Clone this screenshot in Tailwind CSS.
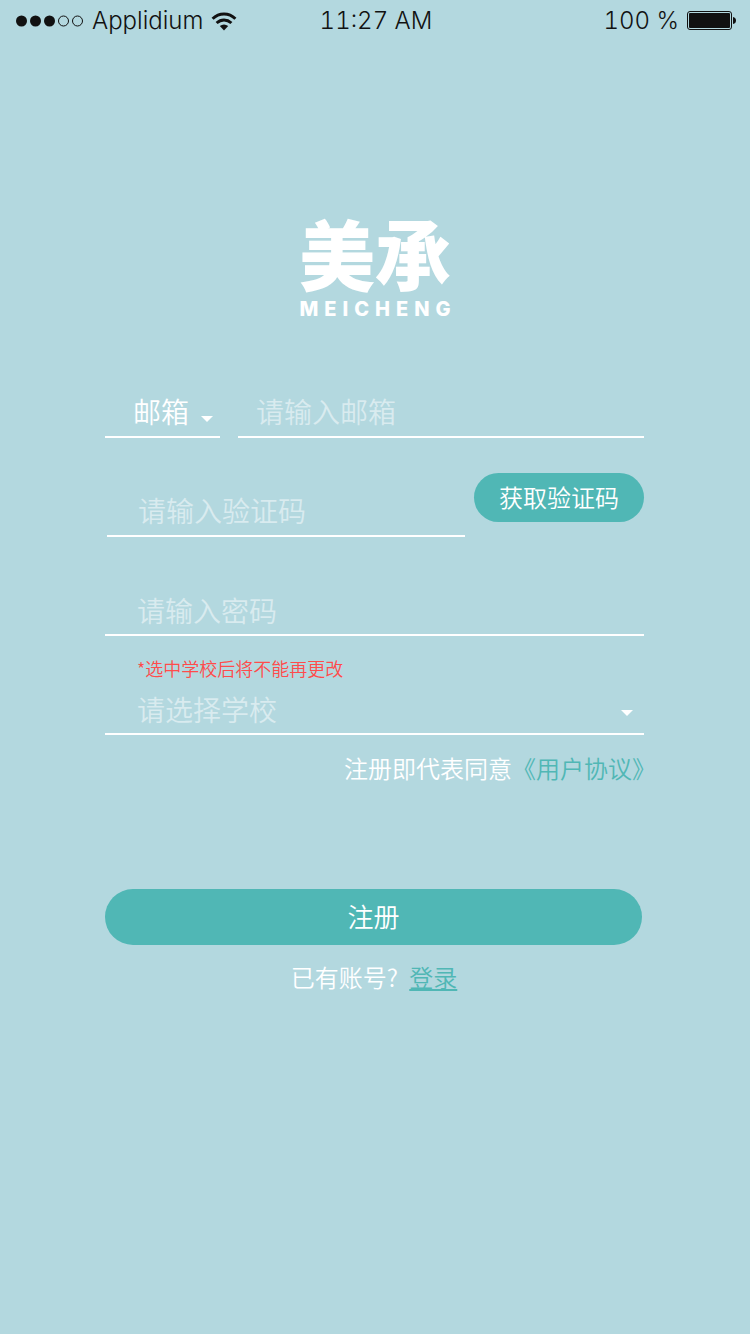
<!DOCTYPE html>
<html lang="zh-CN">
<head>
<meta charset="utf-8">
<meta name="viewport" content="width=device-width, initial-scale=1">
<title>美承 - 注册</title>
<script src="https://cdn.jsdelivr.net/npm/@tailwindcss/browser@4"></script>
</head>
<body class="min-h-screen bg-[#b3d8df] font-['Noto_Sans_CJK_SC',sans-serif] font-[350] text-white">
<header class="grid h-[42px] grid-cols-3 items-center pl-4 pr-3.5 font-['Inter',sans-serif] text-2xl font-light tabular-nums text-[#111]">
  <div class="flex items-center gap-2">
    <svg class="h-3 w-[68px] shrink-0" viewBox="0 0 68 12" fill="#111" aria-hidden="true">
      <circle cx="5.5" cy="6" r="5.5"/><circle cx="19.5" cy="6" r="5.5"/><circle cx="33.5" cy="6" r="5.5"/>
      <g fill="none" stroke="#111"><circle cx="47.5" cy="6" r="5"/><circle cx="61.5" cy="6" r="5"/></g>
    </svg>
    <span>Applidium</span>
    <svg class="h-[19px] w-[26px] shrink-0" viewBox="0 0 26 19" fill="none" stroke="#111" stroke-width="3" aria-hidden="true">
      <path d="M1.6 6.8Q6.5 2 13 2T24.4 6.8"/><path d="M5.6 11Q9 8 13 8T20.4 11"/>
      <path d="M8.8 14Q13 10.800 17.200 14L13 18.500Z" fill="#111" stroke="none"/>
    </svg>
  </div>
  <time class="text-center">11:27 AM</time>
  <div class="flex items-center justify-end gap-2">
    <span>100 %</span>
    <svg class="h-5 w-[49px] shrink-0" viewBox="0 0 49 20" aria-hidden="true">
      <rect x="0.500" y="0.500" width="44" height="18" rx="2.500" fill="none" stroke="#111"/>
      <rect x="2" y="2" width="41" height="15" rx="1" fill="#111"/>
      <path d="M46 6q3 .5 3 3.500T46 13Z" fill="#111"/>
    </svg>
  </div>
</header>

<main class="px-[14%] pt-[171px]">
  <h1 class="flex flex-col items-center">
    <span class="text-[76px] font-black leading-[78px]">美承</span>
    <span class="mt-1.5 pl-1.5 font-['Inter',sans-serif] text-xl font-extrabold leading-6 tracking-[6px]">MEICHENG</span>
  </h1>

  <form class="mr-px mt-[65px] flex flex-col">
    <div class="flex gap-[18px]">
      <div class="relative w-[115px] shrink-0">
        <select aria-label="注册方式" class="h-[52px] w-full appearance-none border-b-2 border-white bg-transparent pl-7 text-[28px] outline-none">
          <option>邮箱</option>
        </select>
        <svg class="pointer-events-none absolute right-[7px] bottom-4 h-1.5 w-3" viewBox="0 0 12 6" fill="#fff" aria-hidden="true"><path d="M0 0H12L6 6Z"/></svg>
      </div>
      <input type="email" aria-label="邮箱" placeholder="请输入邮箱" class="h-[52px] min-w-0 flex-1 border-b-2 border-white bg-transparent pl-[18px] text-[28px] outline-none placeholder:text-white/50">
    </div>

    <div class="mt-[35px] flex items-start gap-[9px]">
      <input type="text" aria-label="验证码" placeholder="请输入验证码" class="ml-0.5 h-16 min-w-0 flex-1 border-b-2 border-white bg-transparent pt-3 pl-[31px] text-[28px] outline-none placeholder:text-white/50">
      <button type="button" class="h-[49px] w-[170px] shrink-0 rounded-full bg-[#50b7b5] pb-0.5 text-2xl">获取验证码</button>
    </div>

    <input type="password" aria-label="密码" placeholder="请输入密码" class="mt-[45px] h-[54px] w-full border-b-2 border-white bg-transparent pt-1 pl-8 text-[28px] outline-none placeholder:text-white/50">

    <label for="school" class="mt-5 pl-8 text-lg leading-6 text-[#ff4b4b]">*选中学校后将不能再更改</label>
    <div class="relative">
      <select id="school" class="h-[55px] w-full appearance-none border-b-2 border-white bg-transparent pt-1 pl-8 text-[28px] text-white/50 outline-none">
        <option>请选择学校</option>
      </select>
      <svg class="pointer-events-none absolute right-[11px] bottom-[19px] h-1.5 w-3" viewBox="0 0 12 6" fill="#fff" aria-hidden="true"><path d="M0 0H12L6 6Z"/></svg>
    </div>

    <p class="-mr-3 mt-[15px] text-right text-2xl leading-9">注册即代表同意<a href="#" class="text-[#50b7b5]">《用户协议》</a></p>

    <div class="mt-[103px] pr-0.5">
      <button type="submit" class="h-14 w-full rounded-full bg-[#50b7b5] pb-1 text-[26px]">注册</button>
    </div>
  </form>

  <p class="mt-3 pr-0.5 text-center text-2xl leading-10">已有账号? <a href="#" class="ml-1.5 text-[#50b7b5] underline">登录</a></p>
</main>
</body>
</html>
